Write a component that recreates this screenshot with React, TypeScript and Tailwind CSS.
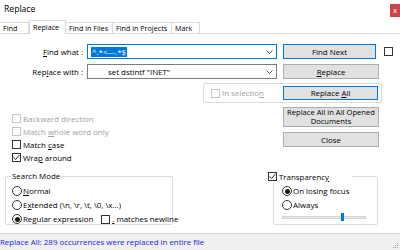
import React from "react";
import clsx from "clsx";

const Check = ({ checked, disabled }: { checked?: boolean; disabled?: boolean }) => (
  <span
    className={clsx(
      "w-[9px] h-[9px] border bg-white flex items-center justify-center shrink-0",
      disabled ? "border-[#c6c6c6]" : "border-[#333333]"
    )}
  >
    {checked && (
      <svg width="7" height="7" viewBox="0 0 7 7">
        <path d="M0.6 3.4 L2.6 5.6 L6.4 1" stroke="#222" strokeWidth="1" fill="none" />
      </svg>
    )}
  </span>
);

const Radio = ({ checked }: { checked?: boolean }) => (
  <span className="w-[10px] h-[10px] rounded-full border border-[#333333] bg-white flex items-center justify-center shrink-0">
    {checked && <span className="w-[5px] h-[5px] rounded-full bg-[#1a1a1a]" />}
  </span>
);

const Btn = ({
  children,
  focused,
  className,
}: {
  children: React.ReactNode;
  focused?: boolean;
  className?: string;
}) => (
  <div
    className={clsx(
      "bg-[#e1e1e1] border flex items-center justify-center text-center shrink-0",
      focused ? "border-[#0078d7]" : "border-[#adadad]",
      className
    )}
  >
    {children}
  </div>
);

const Chevron = () => (
  <svg width="7" height="4" viewBox="0 0 7 4" className="shrink-0">
    <path d="M0.5 0.5 L3.5 3.5 L6.5 0.5" stroke="#555" strokeWidth="1" fill="none" />
  </svg>
);

const tabs = [
  { label: "Find", w: "w-[29px]" },
  { label: "Replace", w: "w-[37px]", active: true },
  { label: "Find in Files", w: "w-[47px]" },
  { label: "Find in Projects", w: "w-[59px]" },
  { label: "Mark", w: "w-[28px]" },
];

const CheckRow = ({
  checked,
  disabled,
  children,
}: {
  checked?: boolean;
  disabled?: boolean;
  children: React.ReactNode;
}) => (
  <div className={clsx("h-[13px] flex items-center gap-[2px] pl-[12px]", disabled && "text-[#a0a0a0]")}>
    <Check checked={checked} disabled={disabled} />
    <span>{children}</span>
  </div>
);

const App = () => {
  return (
    <div className="w-[400px] h-[250px] bg-white flex flex-col overflow-hidden whitespace-nowrap text-[7.9px] leading-[10px] text-black font-['Open_Sans',sans-serif]">
      {/* title bar */}
      <div className="h-[21px] flex items-start justify-between shrink-0">
        <span className="pl-[4px] pt-[4px] text-[8.6px]">Replace</span>
        <span className="mt-[4px] w-[10px] h-[13px] bg-[#c9474c] text-white text-[7px] flex items-center justify-center">
          x
        </span>
      </div>

      {/* tabs */}
      <div className="h-[13px] flex items-end border-b border-[#d9d9d9] shrink-0 text-[7.2px]">
        {tabs.map((t) => (
          <div
            key={t.label}
            className={clsx(
              t.w,
              "border-t border-r border-[#d9d9d9] pl-[3px] overflow-hidden",
              t.active ? "h-[14px] -mb-px bg-white pt-[1px] border-l" : "h-[11px] bg-white"
            )}
          >
            {t.label}
          </div>
        ))}
      </div>

      {/* find what */}
      <div className="mt-[10px] h-[15px] flex items-center shrink-0">
        <span className="w-[83px] text-right">
          <u>F</u>ind what :
        </span>
        <div className="ml-[4px] w-[190px] h-[15px] border border-[#0078d7] flex items-center pl-[3px] pr-[3px]">
          <span className="bg-[#0078d7] text-white px-[1px]">^.*&lt;---.*$</span>
          <span className="ml-auto">
            <Chevron />
          </span>
        </div>
        <Btn focused className="ml-[6px] w-[93px] h-[15px]">
          Find Next
        </Btn>
        <span className="ml-[8px]">
          <Check />
        </span>
      </div>

      {/* replace with */}
      <div className="mt-[5px] h-[15px] flex items-center shrink-0">
        <span className="w-[83px] text-right">
          Rep<u>l</u>ace with :
        </span>
        <div className="ml-[4px] w-[190px] h-[15px] border border-[#7a7a7a] flex items-center pl-[20px] pr-[3px]">
          <span>set dstintf "INET"</span>
          <span className="ml-auto">
            <Chevron />
          </span>
        </div>
        <Btn className="ml-[6px] w-[96px] h-[15px]">
          <span>
            <u>R</u>eplace
          </span>
        </Btn>
      </div>

      {/* in selection frame */}
      <div className="mt-[4px] ml-[203px] w-[179px] h-[20px] border border-[#dcdcdc] rounded-[2px] flex items-center shrink-0">
        <span className="ml-[7px]">
          <Check disabled />
        </span>
        <span className="ml-[2px] text-[#a0a0a0]">
          In selectio<u>n</u>
        </span>
        <Btn focused className="ml-auto mr-[3px] w-[95px] h-[14px]">
          <span>
            Replace <u>A</u>ll
          </span>
        </Btn>
      </div>

      {/* options + buttons */}
      <div className="mt-[4px] flex shrink-0">
        <div className="w-[283px] pt-[5px]">
          <CheckRow disabled>Backward direction</CheckRow>
          <CheckRow disabled>
            Match <u>w</u>hole word only
          </CheckRow>
          <CheckRow>
            Match <u>c</u>ase
          </CheckRow>
          <CheckRow checked>
            Wra<u>p</u> around
          </CheckRow>
        </div>
        <div className="flex flex-col">
          <Btn className="w-[96px] h-[20px] leading-[9px] text-[7.6px]">
            Replace All in All Opened
            <br />
            Documents
          </Btn>
          <Btn className="mt-[5px] w-[96px] h-[15px]">Close</Btn>
        </div>
      </div>

      {/* groups */}
      <div className="mt-[12px] flex shrink-0">
        <div className="relative ml-[5px] w-[168px] h-[49px] border border-[#dcdcdc] rounded-[2px] pt-[7px] pl-[6px]">
          <span className="absolute -top-[6px] left-[5px] bg-white px-[1px]">Search Mode</span>
          <div className="h-[14px] flex items-center gap-[1px]">
            <Radio />
            <span>
              <u>N</u>ormal
            </span>
          </div>
          <div className="h-[14px] flex items-center gap-[1px]">
            <Radio />
            <span>
              E<u>x</u>tended (\n, \r, \t, \0, \x...)
            </span>
          </div>
          <div className="h-[14px] flex items-center gap-[1px]">
            <Radio checked />
            <span>
              Re<u>g</u>ular expression
            </span>
            <span className="ml-[7px]">
              <Check />
            </span>
            <span className="ml-[1px]">
              <u>.</u> matches newline
            </span>
          </div>
        </div>

        <div className="relative ml-[100px] w-[105px] h-[49px] border border-[#dcdcdc] rounded-[2px] pt-[7px] pl-[8px]">
          <div className="absolute -top-[6px] -left-[6px] w-[84px] h-[11px] bg-white flex items-center gap-[2px]">
            <Check checked />
            <span>
              Transparenc<u>y</u>
            </span>
          </div>
          <div className="h-[14px] flex items-center gap-[1px]">
            <Radio checked />
            <span>On losing focus</span>
          </div>
          <div className="h-[14px] flex items-center gap-[1px]">
            <Radio />
            <span>Always</span>
          </div>
          <div className="h-[10px] w-[84px] flex items-center relative">
            <div className="w-full h-[3px] bg-[#e7e7e7] border border-[#d6d6d6]" />
            <div className="absolute left-[59px] top-[1px] w-[3px] h-[8px] bg-[#0078d7]" />
          </div>
        </div>
      </div>

      {/* status bar */}
      <div className="mt-auto h-[17px] bg-[#f0f0f0] border-t border-[#d7d7d7] flex items-center justify-between shrink-0">
        <span className="text-[#2222e6]">Replace All: 289 occurrences were replaced in entire file</span>
        <svg width="6" height="6" viewBox="0 0 6 6" className="self-end mb-[1px] mr-[1px]">
          <rect x="4" y="0" width="1" height="1" fill="#a0a0a0" />
          <rect x="2" y="2" width="1" height="1" fill="#a0a0a0" />
          <rect x="4" y="2" width="1" height="1" fill="#a0a0a0" />
          <rect x="0" y="4" width="1" height="1" fill="#a0a0a0" />
          <rect x="2" y="4" width="1" height="1" fill="#a0a0a0" />
          <rect x="4" y="4" width="1" height="1" fill="#a0a0a0" />
        </svg>
      </div>
    </div>
  );
};

export default App;
